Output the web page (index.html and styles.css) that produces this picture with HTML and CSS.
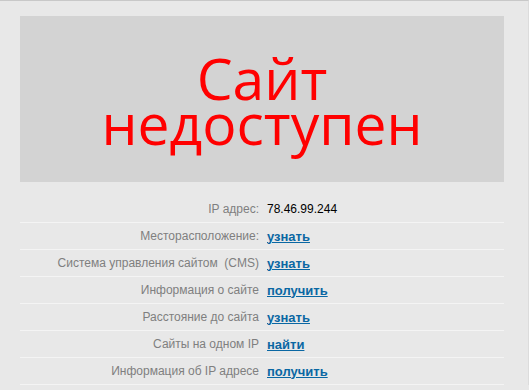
FILE: index.html
```html
<!DOCTYPE html>
<html lang="ru">
<head>
    <meta charset="UTF-8">
    <meta name="viewport" content="width=device-width, initial-scale=1.0">
    <title>Сайт недоступен</title>
    <link rel="stylesheet" href="styles.css">
</head>
<body>
    <div class="page">
        <div class="banner">
            <h1>Сайт<br>недоступен</h1>
        </div>
        <div class="info">
            <div class="row">
                <span class="label">IP адрес:</span>
                <span class="value">78.46.99.244</span>
            </div>
            <div class="row">
                <span class="label">Месторасположение:</span>
                <a class="value" href="#">узнать</a>
            </div>
            <div class="row">
                <span class="label">Система управления сайтом&nbsp; (CMS)</span>
                <a class="value" href="#">узнать</a>
            </div>
            <div class="row">
                <span class="label">Информация о сайте</span>
                <a class="value" href="#">получить</a>
            </div>
            <div class="row">
                <span class="label">Расстояние до сайта</span>
                <a class="value" href="#">узнать</a>
            </div>
            <div class="row">
                <span class="label">Сайты на одном IP</span>
                <a class="value" href="#">найти</a>
            </div>
            <div class="row">
                <span class="label">Информация об IP адресе</span>
                <a class="value" href="#">получить</a>
            </div>
        </div>
    </div>
</body>
</html>
```

FILE: styles.css
```css
body {
    margin: 0;
    padding: 0;
    background-color: #e8e8e8;
    border-top: 1px solid #c8c8c8;
    border-right: 1px solid #dcdcdc;
    font-family: "Liberation Sans", Arial, sans-serif;
}
.page {
    padding: 15px 24px 0 20px;
}
.banner {
    height: 166px;
    background-color: #d3d3d3;
    display: flex;
    align-items: center;
    justify-content: center;
}
.banner h1 {
    margin: 3px 0 0 0;
    font-family: "Open Sans", sans-serif;
    font-weight: normal;
    font-size: 57px;
    line-height: 45px;
    color: #ff0000;
    text-align: center;
}
.info {
    margin-top: 14px;
}
.row {
    display: grid;
    grid-template-columns: 239px 1fr;
    column-gap: 8px;
    align-items: center;
    height: 26px;
    border-bottom: 1px solid #f4f4f4;
    font-size: 12px;
}
.label {
    text-align: right;
    color: #7f7f7f;
}
.value {
    color: #000;
}
a.value {
    color: #0a67a3;
    font-weight: bold;
    font-size: 13px;
}
```
